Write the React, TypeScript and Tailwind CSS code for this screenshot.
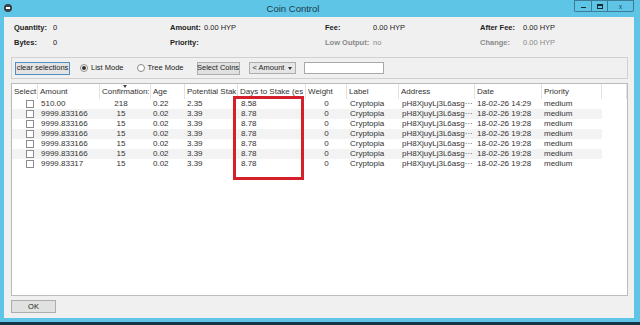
import React from "react";

const rows = [
  ["510.00", "218", "0.22", "2.35", "8.58", "0", "Cryptopia", "pH8XjuyLj3L6asg\u00b7\u00b7\u00b7", "18-02-26 14:29", "medium"],
  ["9999.833166", "15", "0.02", "3.39", "8.78", "0", "Cryptopia", "pH8XjuyLj3L6asg\u00b7\u00b7\u00b7", "18-02-26 19:28", "medium"],
  ["9999.833166", "15", "0.02", "3.39", "8.78", "0", "Cryptopia", "pH8XjuyLj3L6asg\u00b7\u00b7\u00b7", "18-02-26 19:28", "medium"],
  ["9999.833166", "15", "0.02", "3.39", "8.78", "0", "Cryptopia", "pH8XjuyLj3L6asg\u00b7\u00b7\u00b7", "18-02-26 19:28", "medium"],
  ["9999.833166", "15", "0.02", "3.39", "8.78", "0", "Cryptopia", "pH8XjuyLj3L6asg\u00b7\u00b7\u00b7", "18-02-26 19:28", "medium"],
  ["9999.833166", "15", "0.02", "3.39", "8.78", "0", "Cryptopia", "pH8XjuyLj3L6asg\u00b7\u00b7\u00b7", "18-02-26 19:28", "medium"],
  ["9999.83317", "15", "0.02", "3.39", "8.78", "0", "Cryptopia", "pH8XjuyLj3L6asg\u00b7\u00b7\u00b7", "18-02-26 19:28", "medium"],
];

const headers = [
  { t: "Select", w: "w-[26px]" },
  { t: "Amount", w: "w-[62px]" },
  { t: "Confirmation:", w: "w-[51px]" },
  { t: "Age", w: "w-[34px]" },
  { t: "Potential Stak", w: "w-[53px]" },
  { t: "Days to Stake (es", w: "w-[68px]" },
  { t: "Weight", w: "w-[41px]" },
  { t: "Label", w: "w-[52px]" },
  { t: "Address", w: "w-[76px]" },
  { t: "Date", w: "w-[67px]" },
  { t: "Priority", w: "w-[60px]" },
  { t: "", w: "w-[25px]" },
];

function Radio({ checked }: { checked?: boolean }) {
  return (
    <span className="w-[8px] h-[8px] rounded-full border border-[#8a8a8a] bg-white flex items-center justify-center">
      {checked && <span className="w-[4px] h-[4px] rounded-full bg-[#333]" />}
    </span>
  );
}

export default function App() {
  return (
    <div
      className="w-[640px] h-[325px] bg-[#5ec5e6] flex flex-col overflow-hidden text-[#222]"
      style={{ fontFamily: '"Liberation Sans", Arial, sans-serif' }}
    >
      {/* Title bar */}
      <div className="h-[17px] flex items-start relative shrink-0">
        <div className="mt-[4px] ml-[4px] w-[8px] h-[8px] rounded-full bg-[#3a3f44] flex items-center justify-center">
          <span className="w-[4px] h-[1.5px] bg-white" />
        </div>
        <div className="flex-1 text-center text-[9.5px] leading-[17px] text-[#1d3b4a]">Coin Control</div>
        <div className="flex mr-[6px] h-[12px]">
          <div className="w-[17px] h-[12px] border border-[#3d7c96] border-r-0 rounded-bl-[2px] flex items-end justify-center pb-[3px]">
            <span className="w-[5px] h-[1.5px] bg-[#1c2a33]" />
          </div>
          <div className="w-[17px] h-[12px] border border-[#3d7c96] flex items-center justify-center">
            <span className="w-[6px] h-[5px] border border-[#1c2a33] border-t-2" />
          </div>
          <div className="w-[26px] h-[12px] border border-[#3d7c96] border-l-0 rounded-br-[2px] flex items-center justify-center text-[7px] text-[#2b4a58] leading-none">
            x
          </div>
        </div>
      </div>

      {/* Content */}
      <div className="ml-[4px] w-[630px] h-[301px] bg-[#f0f0f0] flex flex-col shrink-0">
        {/* Info */}
        <div className="pt-[3px] pl-[10px] text-[7.5px]">
          <div className="flex h-[15px] items-center">
            <span className="w-[39px] font-bold">Quantity:</span>
            <span className="w-[117px]">0</span>
            <span className="w-[34px] font-bold">Amount:</span>
            <span className="w-[121px]">0.00 HYP</span>
            <span className="w-[48px] font-bold">Fee:</span>
            <span className="w-[107px]">0.00 HYP</span>
            <span className="w-[43px] font-bold">After Fee:</span>
            <span>0.00 HYP</span>
          </div>
          <div className="flex h-[15px] items-center">
            <span className="w-[39px] font-bold">Bytes:</span>
            <span className="w-[117px]">0</span>
            <span className="w-[34px] font-bold">Priority:</span>
            <span className="w-[121px]"></span>
            <span className="w-[48px] font-bold text-[#8a8a8a]">Low Output:</span>
            <span className="w-[107px] text-[#8a8a8a]">no</span>
            <span className="w-[43px] font-bold text-[#8a8a8a]">Change:</span>
            <span className="text-[#8a8a8a]">0.00 HYP</span>
          </div>
        </div>

        {/* Toolbar group */}
        <div className="ml-[7px] mt-[7px] w-[617px] h-[22px] border border-[#d0d0d0] flex items-center text-[7.5px] whitespace-nowrap">
          <div className="ml-[3px] w-[55px] h-[13px] border border-[#4f8fc4] bg-[#e3e3e3] flex items-center justify-center">
            clear selections
          </div>
          <div className="ml-[10px] flex items-center gap-[3px]">
            <Radio checked />
            <span>List Mode</span>
          </div>
          <div className="ml-[13px] flex items-center gap-[3px]">
            <Radio />
            <span>Tree Mode</span>
          </div>
          <div className="ml-[13px] w-[43px] h-[13px] border border-[#adadad] bg-[#e1e1e1] flex items-center justify-center">
            Select Coins
          </div>
          <div className="ml-[9px] w-[47px] h-[12px] border border-[#adadad] bg-[#e6e6e6] flex items-center pl-[3px] gap-[4px]">
            <span>&lt; Amount</span>
            <span className="w-0 h-0 border-l-[2px] border-r-[2px] border-t-[3px] border-l-transparent border-r-transparent border-t-[#333]" />
          </div>
          <div className="ml-[8px] w-[80px] h-[12px] border border-[#a8a8a8] bg-white" />
        </div>

        {/* Table */}
        <div className="ml-[7px] mt-[4px] w-[617px] h-[213px] border border-[#bcbcbc] bg-white relative text-[8px] text-[#333]">
          <div className="flex h-[15px]">
            {headers.map((h, i) => (
              <div
                key={i}
                className={`${h.w} h-[15px] shrink-0 border-r border-[#e3e3e3] pl-[2px] flex items-center whitespace-nowrap overflow-hidden`}
              >
                {h.t}
              </div>
            ))}
          </div>
          <span className="absolute left-[111px] top-[1px] w-0 h-0 border-l-[2px] border-r-[2px] border-t-[3px] border-l-transparent border-r-transparent border-t-[#444]" />
          {rows.map((r, i) => (
            <div key={i} className={`flex h-[10px] w-[590px] items-center ${i % 2 === 1 ? "bg-[#f3f3f3]" : ""}`}>
              <div className="w-[26px] shrink-0 flex justify-end pr-[4px]">
                <span className="w-[8px] h-[8px] border border-[#8c8c8c] bg-white" />
              </div>
              <div className="w-[62px] shrink-0 pl-[3px]">{r[0]}</div>
              <div className="w-[51px] shrink-0 text-center pr-[9px]">{r[1]}</div>
              <div className="w-[34px] shrink-0 pl-[2px]">{r[2]}</div>
              <div className="w-[53px] shrink-0 pl-[2px]">{r[3]}</div>
              <div className="w-[68px] shrink-0 pl-[3px]">{r[4]}</div>
              <div className="w-[41px] shrink-0 text-center">{r[5]}</div>
              <div className="w-[52px] shrink-0 pl-[3px]">{r[6]}</div>
              <div className="w-[76px] shrink-0 pl-[3px] whitespace-nowrap">{r[7]}</div>
              <div className="w-[67px] shrink-0 pl-[2px]">{r[8]}</div>
              <div className="w-[60px] shrink-0 pl-[2px]">{r[9]}</div>
            </div>
          ))}
          {/* red highlight box */}
          <div className="absolute left-[221px] top-[12px] w-[71px] h-[84px] border-[3px] border-[#d3202b]" />
        </div>

        {/* OK button */}
        <div className="ml-[7px] mt-[4px] w-[45px] h-[13px] border border-[#adadad] bg-[#e1e1e1] flex items-center justify-center text-[7.5px]">
          OK
        </div>
      </div>
      <div className="h-[4px] shrink-0" />
      <div className="h-[3px] bg-[#163447] shrink-0" />
    </div>
  );
}
